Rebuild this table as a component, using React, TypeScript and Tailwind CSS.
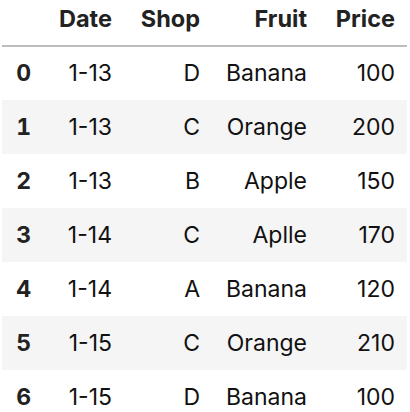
const columns = ["Date", "Shop", "Fruit", "Price"];

const rows = [
  ["1-13", "D", "Banana", "100"],
  ["1-13", "C", "Orange", "200"],
  ["1-13", "B", "Apple", "150"],
  ["1-14", "C", "Aplle", "170"],
  ["1-14", "A", "Banana", "120"],
  ["1-15", "C", "Orange", "210"],
  ["1-15", "D", "Banana", "100"],
];

export default function App() {
  return (
    <div className="h-[412px] w-[410px] overflow-hidden bg-white pl-[2px] font-['Inter',sans-serif] text-[#111]">
      <table className="w-[405px] table-fixed border-collapse">
        <colgroup>
          <col className="w-[41px]" />
          <col className="w-[81px]" />
          <col className="w-[88px]" />
          <col className="w-[107px]" />
          <col className="w-[88px]" />
        </colgroup>
        <thead>
          <tr className="h-[46px] border-b-2 border-[#bdbdbd]">
            <th />
            {columns.map((c) => (
              <th key={c} className="pr-3 pb-[8px] text-right text-[23.5px] font-bold text-[#222]">
                {c}
              </th>
            ))}
          </tr>
        </thead>
        <tbody>
          {rows.map((r, i) => (
            <tr key={i} className={`h-[54px] ${i % 2 === 1 ? "bg-[#f5f5f5]" : "bg-white"}`}>
              <th className="pr-3 text-right text-[23px] font-bold tabular-nums text-[#222]">{i}</th>
              {r.map((v, j) => (
                <td key={j} className="pr-3 text-right text-[23px] font-normal">
                  {v}
                </td>
              ))}
            </tr>
          ))}
        </tbody>
      </table>
    </div>
  );
}
